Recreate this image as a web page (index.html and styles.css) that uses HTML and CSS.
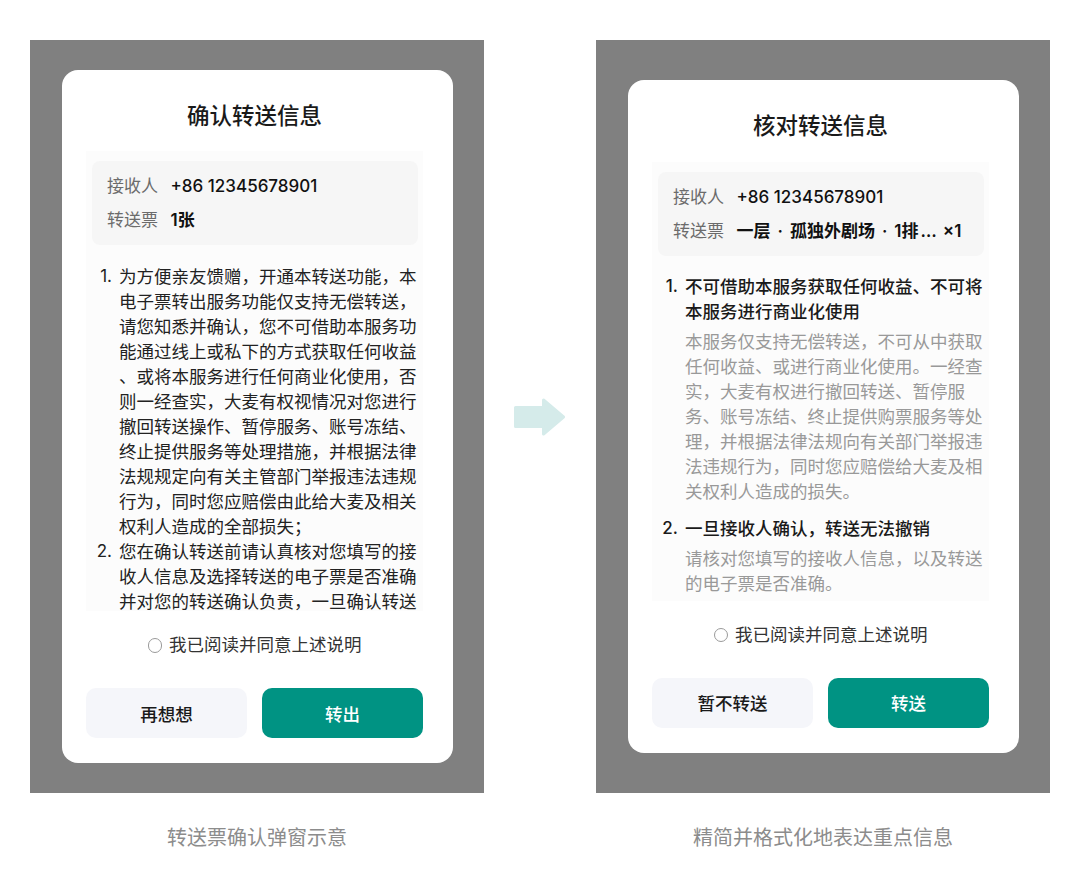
FILE: index.html
```html
<!DOCTYPE html>
<html lang="zh-CN">
<head>
<meta charset="utf-8">
<title>转送票确认弹窗</title>
<link rel="stylesheet" href="styles.css">
</head>
<body>
<div class="stage">
  <div class="col">
    <div class="panel">
      <div class="dialog">
        <div class="title">确认转送信息</div>
        <div class="scroll scroll-fixed">
          <div class="info">
            <div class="row"><span class="label">接收人</span><span class="value value-phone">+86 12345678901</span></div>
            <div class="row"><span class="label">转送票</span><span class="value">1张</span></div>
          </div>
          <ol class="list list-dense">
            <li class="item"><span class="num">1.</span><div class="text">为方便亲友馈赠，开通本转送功能，本电子票转出服务功能仅支持无偿转送，请您知悉并确认，您不可借助本服务功能通过线上或私下的方式获取任何收益、或将本服务进行任何商业化使用，否则一经查实，大麦有权视情况对您进行撤回转送操作、暂停服务、账号冻结、终止提供服务等处理措施，并根据法律法规规定向有关主管部门举报违法违规行为，同时您应赔偿由此给大麦及相关权利人造成的全部损失；</div></li>
            <li class="item"><span class="num">2.</span><div class="text">您在确认转送前请认真核对您填写的接收人信息及选择转送的电子票是否准确并对您的转送确认负责，一旦确认转送</div></li>
          </ol>
        </div>
        <div class="agree"><span class="radio"></span><span>我已阅读并同意上述说明</span></div>
        <div class="actions"><button class="btn btn-ghost">再想想</button><button class="btn btn-primary">转出</button></div>
      </div>
    </div>
    <div class="caption">转送票确认弹窗示意</div>
  </div>

  <div class="arrow">
    <svg width="51" height="38" viewBox="0 0 51 38">
      <path d="M1.5 9.5 H29.5 V2 L49.5 19 L29.5 36 V28.5 H1.5 Z" fill="#d5ebea" stroke="#d5ebea" stroke-width="3" stroke-linejoin="round"/>
    </svg>
  </div>

  <div class="col">
    <div class="panel">
      <div class="dialog">
        <div class="title">核对转送信息</div>
        <div class="scroll">
          <div class="info">
            <div class="row"><span class="label">接收人</span><span class="value value-phone">+86 12345678901</span></div>
            <div class="row"><span class="label">转送票</span><span class="value value-strong">一层<span class="dot">·</span>孤独外剧场<span class="dot">·</span>1排<span class="ellipsis">…</span>×1</span></div>
          </div>
          <ol class="list">
            <li class="item"><span class="num num-strong">1.</span><div class="text"><div class="item-title">不可借助本服务获取任何收益、不可将本服务进行商业化使用</div><div class="item-body">本服务仅支持无偿转送，不可从中获取任何收益、或进行商业化使用。一经查实，大麦有权进行撤回转送、暂停服务、账号冻结、终止提供购票服务等处理，并根据法律法规向有关部门举报违法违规行为，同时您应赔偿给大麦及相关权利人造成的损失。</div></div></li>
            <li class="item item-spaced"><span class="num num-strong">2.</span><div class="text"><div class="item-title">一旦接收人确认，转送无法撤销</div><div class="item-body">请核对您填写的接收人信息，以及转送的电子票是否准确。</div></div></li>
          </ol>
        </div>
        <div class="agree"><span class="radio"></span><span>我已阅读并同意上述说明</span></div>
        <div class="actions"><button class="btn btn-ghost">暂不转送</button><button class="btn btn-primary">转送</button></div>
      </div>
    </div>
    <div class="caption">精简并格式化地表达重点信息</div>
  </div>
</div>
</body>
</html>
```

FILE: styles.css
```css
* { box-sizing: border-box; }
html, body { margin: 0; padding: 0; background: #ffffff; }
body {
  font-family: "Inter", "Noto Sans CJK SC", sans-serif;
  color: #222;
  text-spacing-trim: space-all;
}
.stage {
  display: flex;
  align-items: flex-start;
  padding: 40px 30px 0 30px;
}
.col {
  width: 454px;
  display: flex;
  flex-direction: column;
}
.panel {
  height: 753px;
  background: #808080;
  display: flex;
  align-items: center;
  padding-left: 31.5px;
}
.arrow {
  width: 112px;
  height: 753px;
  display: flex;
  align-items: center;
  justify-content: center;
}
.arrow svg { display: block; margin-left: -1px; }
.dialog {
  width: 391px;
  background: #fff;
  border-radius: 16px;
  padding: 0 29.5px 25px 24.5px;
}
.title {
  padding-top: 31px;
  margin-bottom: 20.5px;
  line-height: 30px;
  font-size: 22.5px;
  font-weight: 500;
  color: #1a1a1a;
  text-align: center;
}
.scroll {
  background: #fcfcfc;
  padding: 10px 5px 4.5px 6px;
}
.scroll-fixed {
  height: 460px;
  overflow: hidden;
  padding-bottom: 0;
}
.info {
  background: #f6f6f6;
  border-radius: 8px;
  padding: 13px 15px;
  display: flex;
  flex-direction: column;
  gap: 10px;
}
.row {
  display: flex;
  align-items: center;
  line-height: 24px;
  font-size: 17px;
}
.label {
  color: #6b6b6b;
  width: 51px;
  margin-right: 12.5px;
  flex: none;
}
.value {
  color: #111;
  font-weight: 600;
}
.value-phone { font-weight: 500; }
.value-strong { font-weight: 600; }
.dot { margin: 0 7px; }
.ellipsis { margin: 0 5px 0 2px; letter-spacing: 1px; }
.list {
  list-style: none;
  margin: 18.5px 0 0 0;
  padding: 0;
  font-size: 17.5px;
  line-height: 25px;
}
.item {
  display: flex;
  align-items: flex-start;
}
.item-spaced { margin-top: 12px; }
.num {
  width: 20px;
  text-align: right;
  margin-right: 7px;
  flex: none;
  color: #222;
  font-size: 17px;
}
.num-strong { font-weight: 500; color: #1a1a1a; }
.text {
  flex: 1;
  min-width: 0;
}
.list-dense .text {
  line-break: anywhere;
  color: #222;
}
.item-title {
  font-weight: 500;
  color: #1a1a1a;
}
.item-body {
  margin-top: 5px;
  color: #999;
}
.agree {
  margin-top: 21px;
  display: flex;
  align-items: center;
  justify-content: center;
  gap: 7px;
  font-size: 17.5px;
  line-height: 26px;
  color: #333;
}
.radio {
  width: 14.5px;
  height: 14.5px;
  border: 1px solid #9a9a9a;
  border-radius: 50%;
  background: #fff;
  flex: none;
}
.actions {
  margin-top: 30px;
  display: flex;
  gap: 15px;
}
.btn {
  flex: 1;
  height: 50px;
  border: none;
  border-radius: 10px;
  font-family: "Inter", "Noto Sans CJK SC", sans-serif;
  font-size: 17.5px;
  font-weight: 500;
  padding: 0;
}
.btn-ghost { background: #f5f6fa; color: #1a1a1a; }
.btn-primary { background: #009383; color: #fff; }
.caption {
  margin-top: 31px;
  text-align: center;
  font-size: 20px;
  line-height: 28px;
  color: #8c8c8c;
}
```
